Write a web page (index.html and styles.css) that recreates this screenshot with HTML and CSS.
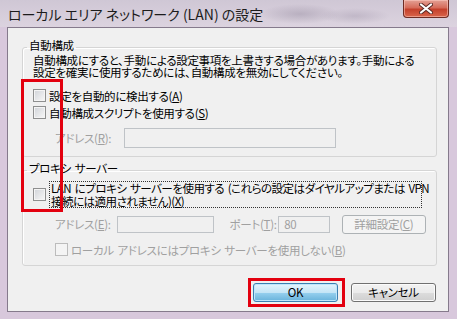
FILE: index.html
```html
<!DOCTYPE html>
<html lang="ja">
<head>
  <meta charset="UTF-8" />
  <title>ローカル エリア ネットワーク (LAN) の設定</title>
  <link rel="stylesheet" href="styles.css">
</head>
<body>

  <div class="window">
    <div class="titlebar">
      <span class="title">ローカル エリア ネットワーク (LAN) の設定</span>
      <span class="close">
        <svg width="14" height="11" viewBox="0 0 14 11">
          <path d="M2 1.5 L12 9.5 M12 1.5 L2 9.5" stroke="#5a2a25" stroke-width="4" stroke-linecap="round" />
          <path d="M2 1.5 L12 9.5 M12 1.5 L2 9.5" stroke="#fff" stroke-width="2.2" stroke-linecap="round" />
        </svg>
      </span>
    </div>

    <div class="client">
      <fieldset class="group group-auto">
        <legend>自動構成</legend>
        <p class="desc">自動構成にすると、手動による設定事項を上書きする場合があります。手動による<br>設定を確実に使用するためには、自動構成を無効にしてください。</p>
        <label class="check check-first"><span class="box"></span>設定を自動的に検出する(<u>A</u>)</label>
        <label class="check"><span class="box"></span>自動構成スクリプトを使用する(<u>S</u>)</label>
        <div class="field-row row-script disabled">
          <span class="lbl lbl-r">アドレス(<u>R</u>):</span>
          <span class="input input-script"></span>
        </div>
      </fieldset>

      <fieldset class="group group-proxy">
        <legend>プロキシ サーバー</legend>
        <label class="check check-multi"><span class="box"></span><span class="focus">LAN にプロキシ サーバーを使用する (これらの設定はダイヤルアップまたは VPN<br>接続には適用されません)(<u>X</u>)</span></label>
        <div class="field-row row-proxy disabled">
          <span class="lbl lbl-e">アドレス(<u>E</u>):</span>
          <span class="input input-addr"></span>
          <span class="lbl lbl-port">ポート(<u>T</u>):</span>
          <span class="input input-port">80</span>
          <span class="btn btn-off">詳細設定(<u>C</u>)</span>
        </div>
        <label class="check check-local disabled"><span class="box"></span>ローカル アドレスにはプロキシ サーバーを使用しない(<u>B</u>)</label>
      </fieldset>

      <div class="buttons">
        <span class="btn btn-default">OK</span>
        <span class="btn">キャンセル</span>
      </div>
    </div>

    <div class="mark mark-checks"></div>
    <div class="mark mark-ok"></div>
  </div>

</body>
</html>
```

FILE: styles.css
```css
* {
  box-sizing: border-box;
}
body {
  margin: 0;
  font-family: "Noto Sans CJK JP", sans-serif;
  font-size: 11.5px;
  letter-spacing: -0.3px;
  word-spacing: 1.5px;
  font-feature-settings: "palt";
  color: #000;
}
.window {
  position: relative;
  width: 457px;
  height: 319px;
  display: flex;
  flex-direction: column;
  background: #d8c8dc;
}
.titlebar {
  height: 27px;
  display: flex;
  align-items: flex-start;
  padding: 0 8px 0 8px;
  background:
    radial-gradient(ellipse 40px 10px at 300px 14px, rgba(150, 140, 160, 0.45), transparent),
    radial-gradient(ellipse 35px 8px at 355px 16px, rgba(160, 150, 170, 0.4), transparent),
    linear-gradient(#cfc7d5, #dcd3df);
}
.title {
  margin-top: 6px;
  font-size: 14px;
  letter-spacing: 0;
  word-spacing: 0;
  line-height: 16px;
  color: #1c1c1c;
  white-space: nowrap;
}
.close {
  margin-left: auto;
  width: 46px;
  height: 18px;
  display: flex;
  align-items: center;
  justify-content: center;
  border: 1px solid #6e2c24;
  border-top: none;
  border-radius: 0 0 4px 4px;
  background: linear-gradient(#e4a195 0%, #d66c5a 45%, #c4402b 55%, #d9654b 100%);
  box-shadow: inset 0 0 0 1px rgba(255, 210, 200, 0.5);
}
.client {
  flex: 1;
  margin: 0 8px 7px 7px;
  background: #f0f0f0;
  border: 1px solid #857a8c;
  display: flex;
  flex-direction: column;
}
.group {
  margin: 11px 11px 0 14px;
  padding: 0 10px 8px 10px;
  border: 1px solid #d5d5d5;
  border-radius: 3px;
  box-shadow: inset 1px 1px 0 #fff;
  min-width: 0;
}
.group legend {
  margin-left: -6px;
  padding: 0 2px 4px;
  line-height: 12px;
}
.group-proxy {
  margin-top: 5px;
  padding-bottom: 7px;
}
.desc {
  margin: 0;
  line-height: 11.5px;
  white-space: nowrap;
}
.check {
  display: flex;
  align-items: center;
  height: 17px;
  white-space: nowrap;
}
.check-first {
  margin-top: 9px;
}
.box {
  flex: none;
  width: 13px;
  height: 13px;
  margin-right: 3px;
  border: 1px solid #8e8f8f;
  background: linear-gradient(135deg, #d0d3d8, #f8f8f8);
  box-shadow: inset 0 0 0 1px #f4f4f4;
}
.disabled {
  color: #a0a0a0;
}
.disabled .box {
  border-color: #bcbcbc;
  background: #f4f4f4;
}
.field-row {
  display: flex;
  align-items: center;
  padding-left: 22px;
  white-space: nowrap;
}
.row-script {
  margin-top: 7px;
  height: 20px;
}
.row-proxy {
  margin-top: 7px;
  height: 18px;
}
.lbl-r {
  width: 69px;
}
.lbl-e {
  width: 63px;
}
.lbl-port {
  width: 49px;
  margin-left: 16px;
}
.input {
  display: block;
  border: 1px solid #bfc3c7;
  background: #f0f0f0;
  color: #a0a0a0;
  line-height: 15px;
  padding-left: 5px;
}
.input-script {
  width: 212px;
  height: 20px;
}
.input-addr {
  width: 97px;
  height: 17px;
}
.input-port {
  width: 52px;
  height: 17px;
}
.check-multi {
  height: auto;
  margin-top: 3px;
}
.focus {
  border: 1px dotted #333;
  padding: 0 1px;
  line-height: 12.5px;
  letter-spacing: -0.5px;
  width: 373px;
}
.check-local {
  margin-top: 8px;
  padding-left: 22px;
}
.buttons {
  display: flex;
  justify-content: flex-end;
  gap: 13px;
  margin: 17px 12px 0 0;
}
.btn {
  display: block;
  width: 85px;
  height: 19px;
  border: 1px solid #707070;
  border-radius: 3px;
  background: linear-gradient(#f2f2f2 0%, #ebebeb 50%, #dddddd 50%, #cfcfcf 100%);
  box-shadow: inset 0 0 0 1px #fbfbfb;
  text-align: center;
  line-height: 17px;
}
.btn-default {
  border-color: #3c7fb1;
  background: linear-gradient(#e5f4fc 0%, #c4e5f6 50%, #98d1ef 50%, #68b3db 100%);
  box-shadow: inset 0 0 0 1px #bfe6fb;
}
.btn-off {
  margin-left: 12px;
  border-color: #adb2b5;
  background: #f4f4f4;
  box-shadow: none;
}
.mark {
  position: absolute;
  border: 3px solid #e3000f;
}
.mark-checks {
  left: 21px;
  top: 79px;
  width: 42px;
  height: 133px;
}
.mark-ok {
  left: 248px;
  top: 278px;
  width: 97px;
  height: 29px;
}
```
